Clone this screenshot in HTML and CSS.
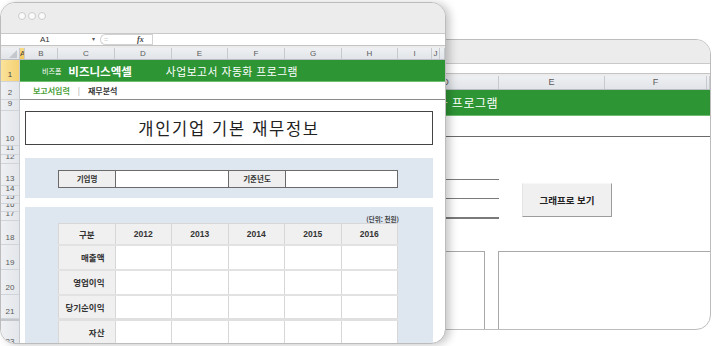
FILE: index.html
```
<!DOCTYPE html>
<html lang="ko">
<head>
    <meta charset="utf-8" />
    <title>비즈니스엑셀 - 사업보고서 자동화 프로그램</title>
    <link rel="stylesheet" href="styles.css">
</head>
<body>
    <!-- back window: chart sheet -->
    <div class="win win-back">
        <div class="titlebar"></div>
        <div class="fbar"></div>
        <div class="fgap"></div>
        <div class="colhead colhead-back">
            <div class="ch"></div>
            <div class="ch">D</div>
            <div class="ch">E</div>
            <div class="ch">F</div>
            <div class="ch"></div>
        </div>
        <div class="banner banner-back">
            <div class="banner-clip"><span>사업보고서 자동화 프로그램</span></div>
        </div>
        <div class="back-rule"></div>
        <div class="back-form">
            <div class="back-lines">
                <div class="bl"></div>
                <div class="bl"></div>
                <div class="bl bl-thick"></div>
            </div>
            <div class="btn">그래프로 보기</div>
        </div>
        <div class="back-boxes">
            <div class="box-l"></div>
            <div class="box-r"></div>
        </div>
    </div>

    <!-- front window: input sheet -->
    <div class="win win-front">
        <div class="titlebar">
            <span class="dot"></span><span class="dot"></span><span class="dot"></span>
        </div>
        <div class="fbar">
            <div class="namebox">A1<span class="caret">▾</span></div>
            <div class="fx-pill"><span class="eq">=</span><span class="fx">fx</span></div>
            <div class="finput"></div>
        </div>
        <div class="fgap"></div>
        <div class="colhead colhead-front">
            <div class="ch corner"></div>
            <div class="ch ch-sel">A</div>
            <div class="ch">B</div>
            <div class="ch">C</div>
            <div class="ch">D</div>
            <div class="ch">E</div>
            <div class="ch">F</div>
            <div class="ch">G</div>
            <div class="ch">H</div>
            <div class="ch">I</div>
            <div class="ch">J</div>
            <div class="ch"></div>
        </div>
        <div class="sheet">
            <div class="rowhead">
                <div class="rh rh-sel">1</div>
                <div class="rh">2</div>
                <div class="rh">9</div>
                <div class="rh">10</div>
                <div class="rh">11</div>
                <div class="rh">12</div>
                <div class="rh">13</div>
                <div class="rh">14</div>
                <div class="rh">15</div>
                <div class="rh">16</div>
                <div class="rh">17</div>
                <div class="rh">18</div>
                <div class="rh">19</div>
                <div class="rh">20</div>
                <div class="rh">21</div>
                <div class="rh rh-gap">23</div>
            </div>
            <div class="main">
                <div class="banner banner-front">
                    <span class="brand-sm">비즈폼</span>
                    <span class="brand">비즈니스엑셀</span>
                    <span class="app-title">사업보고서 자동화 프로그램</span>
                </div>
                <div class="nav">
                    <span class="nav-on">보고서입력</span>
                    <span class="nav-sep">|</span>
                    <span class="nav-cur">재무분석</span>
                </div>
                <div class="doc-title">개인기업 기본 재무정보</div>
                <div class="panel panel-info">
                    <div class="field-row">
                        <div class="f-label">기업명</div>
                        <div class="f-input"></div>
                        <div class="f-label">기준년도</div>
                        <div class="f-input"></div>
                    </div>
                </div>
                <div class="panel panel-fin">
                    <div class="unit">(단위: 천원)</div>
                    <table class="fin-table">
                        <thead>
                            <tr><th>구분</th><th>2012</th><th>2013</th><th>2014</th><th>2015</th><th>2016</th></tr>
                        </thead>
                        <tbody>
                            <tr><th>매출액</th><td></td><td></td><td></td><td></td><td></td></tr>
                            <tr><th>영업이익</th><td></td><td></td><td></td><td></td><td></td></tr>
                            <tr><th>당기순이익</th><td></td><td></td><td></td><td></td><td></td></tr>
                            <tr class="split"><th>자산</th><td></td><td></td><td></td><td></td><td></td></tr>
                        </tbody>
                    </table>
                </div>
            </div>
        </div>
    </div>
</body>
</html>
```

FILE: styles.css
```
* { box-sizing: border-box; margin: 0; padding: 0; }
body {
    font-family: "Liberation Sans", "Noto Sans CJK KR", sans-serif;
    background: #fff;
    color: #333;
    width: 714px;
    height: 346px;
    overflow: hidden;
    position: relative;
}

/* windows */
.win {
    position: absolute;
    background: #fff;
    border: 1px solid #bcbcbc;
    border-radius: 15px;
    overflow: hidden;
    display: flex;
    flex-direction: column;
}
.win-back {
    left: 380px;
    top: 39px;
    width: 331px;
    height: 291px;
}
.win-front {
    left: 0;
    top: 2px;
    width: 446px;
    height: 342px;
    box-shadow: 4px 1px 8px rgba(0,0,0,0.22);
}
.titlebar {
    flex: none;
    background: #ececec;
    border-bottom: 1px solid #c9c9c9;
    display: flex;
    align-items: flex-start;
    gap: 2px;
    padding: 9px 0 0 17px;
}
.win-front .titlebar { height: 31px; }
.win-back .titlebar { height: 24px; }
.dot {
    width: 8px;
    height: 8px;
    border-radius: 50%;
    background: #fafafa;
    border: 1px solid #cbcbcb;
}
.fbar {
    flex: none;
    background: #fff;
    border-bottom: 1px solid #c4c4c4;
    display: flex;
    align-items: stretch;
}
.win-front .fbar { height: 12px; }
.win-back .fbar { height: 10px; }
.fgap {
    flex: none;
    height: 2px;
    background: #ececec;
}
.namebox {
    width: 97px;
    font-size: 8px;
    line-height: 11px;
    color: #333;
    padding-left: 39px;
    position: relative;
}
.caret {
    position: absolute;
    left: 91px;
    top: 0;
    font-size: 6px;
    color: #555;
}
.fx-pill {
    width: 52px;
    margin-left: 2px;
    border: 1px solid #d2d2d2;
    border-right: none;
    border-radius: 6px 0 0 6px;
    display: flex;
    align-items: center;
    font-size: 7px;
}
.eq { color: #c8c8c8; margin-left: 3px; }
.fx {
    margin-left: 29px;
    font-family: "Liberation Serif", serif;
    font-style: italic;
    font-weight: bold;
    font-size: 8px;
    color: #444;
}
.finput {
    flex: 1;
    border-left: 1px solid #d2d2d2;
}

/* column headers */
.colhead {
    flex: none;
    display: grid;
    background: linear-gradient(#eef0f3, #e1e4e8);
    border-bottom: 1px solid #b9bcc2;
}
.colhead-front {
    height: 12px;
    grid-template-columns: 19px 5px 33px 57px 57px 56px 57px 57px 56px 34px 8px 1fr;
}
.colhead-back {
    height: 14px;
    grid-template-columns: 12px 106px 106px 102px 1fr;
}
.ch {
    border-right: 1px solid #c6c9ce;
    font-size: 8px;
    line-height: 11px;
    text-align: center;
    color: #5a5a5a;
    overflow: hidden;
}
.colhead-back .ch { font-size: 9px; line-height: 13px; }
.ch-sel { background: linear-gradient(#f9dc86, #f2c85a); color: #444; }
.corner { position: relative; }
.corner::after {
    content: "";
    position: absolute;
    right: 2px;
    bottom: 1px;
    border-left: 8px solid transparent;
    border-bottom: 8px solid #c4c7cc;
}

/* green banner */
.banner {
    flex: none;
    background: #2e9535;
    border-bottom: 1px solid #6fbd70;
    color: #fff;
    display: flex;
    align-items: center;
    white-space: nowrap;
    font-family: "Noto Sans CJK KR", sans-serif;
}
.banner-front {
    height: 22px;
    padding-left: 22px;
}
.banner-back { height: 26px; }
.banner-clip {
    width: 117px;
    overflow: hidden;
    display: flex;
    justify-content: flex-end;
    font-size: 12px;
    line-height: 16px;
    letter-spacing: 0.5px;
}
.brand-sm { font-size: 7px; margin-right: 7px; }
.brand { font-size: 11.5px; font-weight: bold; margin-right: 34px; }
.app-title { font-size: 10.8px; letter-spacing: 0.5px; }

/* back sheet body */
.back-rule {
    flex: none;
    margin-top: 20px;
    border-top: 1px solid #6a6a6a;
}
.back-form {
    flex: none;
    height: 114px;
    display: flex;
    align-items: flex-start;
}
.back-lines {
    width: 118px;
    padding-top: 42px;
}
.bl {
    height: 19px;
    border-top: 1px solid #7a7a7a;
}
.bl-thick { border-top-width: 2px; }
.btn {
    margin: 46px 0 0 23px;
    width: 90px;
    height: 34px;
    background: #f0f0f0;
    border: 1px solid;
    border-color: #f8f8f8 #9c9c9c #9c9c9c #e4e4e4;
    font-family: "Noto Sans CJK KR", sans-serif;
    font-size: 9.5px;
    font-weight: bold;
    color: #222;
    display: flex;
    align-items: center;
    justify-content: center;
}
.back-boxes {
    flex: 1;
    display: flex;
}
.box-l {
    width: 104px;
    border-top: 1px solid #a8a8a8;
    border-right: 1px solid #a8a8a8;
}
.box-r {
    flex: 1;
    margin-left: 13px;
    border-top: 1px solid #a8a8a8;
    border-left: 1px solid #a8a8a8;
}

/* front sheet body */
.sheet {
    flex: 1;
    min-height: 0;
    display: flex;
}
.rowhead {
    width: 19px;
    flex: none;
    background: linear-gradient(90deg, #eef0f3, #e3e6ea);
    border-right: 1px solid #c6c9ce;
    display: grid;
    grid-template-rows: 22px 18px 11px 35px 9px 9px 22px 10px 8px 8px 9px 24px 25px 25px 24px 30px;
}
.rh {
    border-bottom: 1px solid #d0d3d8;
    font-size: 8px;
    line-height: 8px;
    color: #5a5a5a;
    display: flex;
    align-items: flex-end;
    justify-content: center;
    padding-bottom: 2px;
    overflow: hidden;
}
.rh-sel { background: linear-gradient(90deg, #fae39b, #f5d173); color: #444; }
.rh-gap { border-top: 2px solid #c3c6cb; }
.main {
    flex: 1;
    min-width: 0;
    display: flex;
    flex-direction: column;
    font-family: "Noto Sans CJK KR", sans-serif;
}
.nav {
    flex: none;
    height: 18px;
    border-bottom: 1px solid #8a8a8a;
    display: flex;
    align-items: center;
    padding-left: 13px;
    font-size: 8px;
    font-weight: bold;
}
.nav-on { color: #4c9f3a; }
.nav-sep { color: #9a9a9a; margin: 0 8px; font-weight: normal; }
.nav-cur { color: #333; }
.doc-title {
    flex: none;
    margin: 11px 12px 0 5px;
    height: 34px;
    border: 1px solid #444;
    display: flex;
    align-items: center;
    justify-content: center;
    font-size: 16.5px;
    letter-spacing: 1.7px;
    color: #222;
}
.panel {
    flex: none;
    margin: 0 12px 0 5px;
    background: #dee6f0;
}
.panel-info {
    margin-top: 13px;
    height: 40px;
    padding: 12px 0 0 33px;
}
.field-row {
    width: 340px;
    height: 18px;
    display: grid;
    grid-template-columns: 57px 113px 57px 1fr;
    border: 1px solid #6a6a6a;
    background: #fff;
}
.f-label {
    background: #efefef;
    border-right: 1px solid #6a6a6a;
    font-size: 7.5px;
    font-weight: bold;
    line-height: 16px;
    text-align: center;
    color: #333;
}
.f-input { border-right: 1px solid #6a6a6a; }
.f-input:last-child { border-right: none; }
.panel-fin {
    flex: 1;
    margin-top: 9px;
    padding: 9px 34px 0 33px;
}
.unit {
    font-size: 6.5px;
    line-height: 7px;
    text-align: right;
    font-weight: bold;
    color: #444;
}
.fin-table {
    width: 340px;
    border-collapse: collapse;
    table-layout: fixed;
    background: #fff;
    font-size: 8.5px;
    color: #333;
}
.fin-table th,
.fin-table td {
    border: 1px solid #d7d7d7;
    border-bottom: 2px solid #e2e2e2;
}
.fin-table thead th {
    height: 21px;
    background: #f0f0f0;
    text-align: center;
    font-family: "Liberation Sans", "Noto Sans CJK KR", sans-serif;
}
.fin-table tbody tr { height: 25px; }
.fin-table tbody th {
    background: #f0f0f0;
    text-align: right;
    padding-right: 10px;
}
.fin-table tr.split th,
.fin-table tr.split td { border-top: 3px solid #e0e0e0; }
```
